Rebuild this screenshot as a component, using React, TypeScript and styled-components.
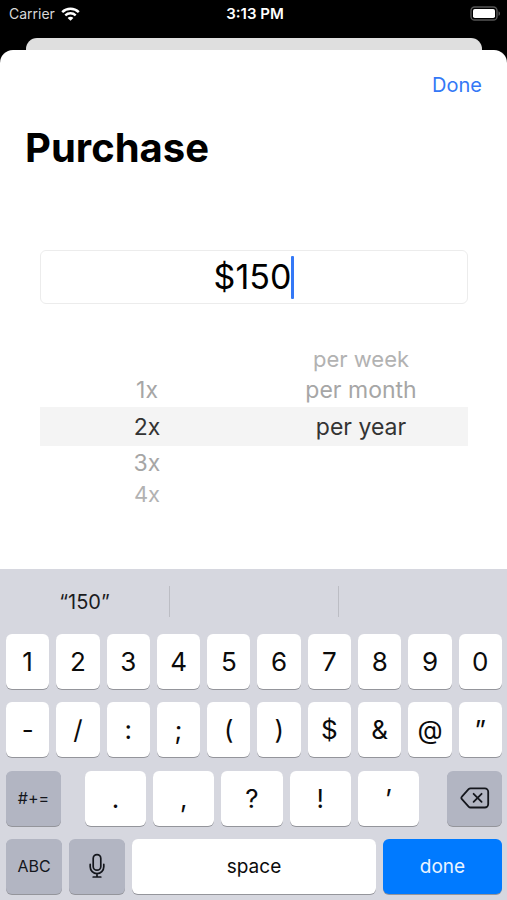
import React, { useState } from "react";
import styled, { createGlobalStyle, css } from "styled-components";

const GlobalStyle = createGlobalStyle`
  *, *::before, *::after { box-sizing: border-box; }
  html, body { margin: 0; background: #000; }
  body, button, input {
    font-family: Inter, "Liberation Sans", sans-serif;
  }
  button { margin: 0; padding: 0; border: 0; background: none; cursor: pointer; }
`;

const Screen = styled.div`
  display: flex;
  flex-direction: column;
  min-height: 100vh;
  background: #000;
`;

const StatusBar = styled.header`
  display: grid;
  grid-template-columns: 1fr auto 1fr;
  align-items: center;
  height: 27px;
  margin-bottom: 11px;
  padding: 0 6px 0 9px;
  color: #fff;
  font-size: 14px;
`;

const Carrier = styled.span`
  display: flex;
  align-items: center;
  gap: 6px;
  color: #d8d8d8;
`;

const Clock = styled.time`
  font-size: 15px;
  font-weight: 600;
`;

const BatterySlot = styled.span`
  display: flex;
  justify-content: flex-end;
`;

const BackCard = styled.div`
  height: 12px;
  margin: 0 25px 0 26px;
  border-radius: 11px 11px 0 0;
  background: #dfdfdf;
`;

const Sheet = styled.main`
  flex: 1;
  display: flex;
  flex-direction: column;
  border-radius: 13px 13px 0 0;
  background: #fff;
  overflow: hidden;
`;

const SheetNav = styled.nav`
  display: flex;
  justify-content: flex-end;
  padding: 20px 25px 0;
`;

const DoneLink = styled.button`
  color: #3478f6;
  font-size: 20px;
  line-height: 30px;
`;

const Title = styled.h1`
  margin: 24px 25px 0;
  color: #000;
  font-size: 40px;
  font-weight: 700;
  line-height: 48px;
`;

const Form = styled.form`
  flex: 1;
  margin: 78px 39px 0 40px;
`;

const AmountField = styled.label`
  display: flex;
  align-items: center;
  justify-content: center;
  height: 54px;
  border: 1px solid #ececec;
  border-radius: 6px;
`;

const AmountInput = styled.input`
  field-sizing: content;
  padding: 0;
  border: 0;
  outline: 0;
  background: transparent;
  color: #000;
  caret-color: transparent;
  font-size: 34px;
  line-height: 44px;
`;

const Caret = styled.span`
  width: 3px;
  height: 43px;
  border-radius: 1px;
  background: #3478f6;
`;

const Wheels = styled.div`
  display: grid;
  grid-template-columns: 1fr 1fr;
  margin-top: 47px;
`;

const Wheel = styled.fieldset`
  display: grid;
  grid-template-rows: 22px 34px 39px 34px 28px;
  min-width: 0;
  margin: 0;
  padding: 0;
  border: 0;
`;

type Depth = "far" | "near" | "selected";

const WheelItem = styled.label<{ $depth: Depth; $row: number }>`
  grid-row: ${(p) => p.$row};
  display: flex;
  align-items: ${(p) => (p.$depth === "far" && p.$row === 1 ? "flex-end" : "center")};
  justify-content: center;
  white-space: nowrap;
  font-size: 23px;
  line-height: 32px;
  color: #a6a6a6;
  ${(p) =>
    p.$depth === "selected" &&
    css`
      background: #f4f4f4;
      color: #333;
    `}
  ${(p) =>
    p.$depth === "far" &&
    css`
      color: #b2b2b2;
      font-size: 22px;
      line-height: 28px;
    `}
`;

const HiddenRadio = styled.input`
  appearance: none;
  width: 0;
  height: 0;
  margin: 0;
`;

const Keyboard = styled.section`
  background: #d6d7df;
  padding-bottom: 6px;
`;

const Suggestions = styled.div`
  display: grid;
  grid-template-columns: repeat(3, 1fr);
  align-items: center;
  height: 65px;
`;

const Suggestion = styled.button`
  height: 31px;
  color: #1c1c1e;
  font-size: 20px;
  line-height: 30px;
  & + & {
    border-left: 1px solid #bcbdc4;
  }
`;

const Keys = styled.div`
  display: flex;
  flex-direction: column;
  justify-content: space-between;
  min-height: 260px;
  padding: 0 5px 0 6px;
`;

const KeyRow = styled.div`
  display: flex;
  gap: 7px;
`;

const PunctuationGroup = styled.div`
  flex: 1;
  display: flex;
  gap: 7px;
  margin: 0 21px 0 17px;
`;

type KeyTone = "light" | "dark" | "blue";

const tones: Record<KeyTone, { back: string; text: string }> = {
  light: { back: "#fff", text: "#0b0b0b" },
  dark: { back: "#b2b5c2", text: "#14161c" },
  blue: { back: "#007aff", text: "#eaf4ff" },
};

const Key = styled.button<{ $tone?: KeyTone; $width?: number; $size?: number }>`
  flex: ${(p) => (p.$width ? `0 0 ${p.$width}px` : "1 1 0")};
  display: flex;
  align-items: center;
  justify-content: center;
  height: 55px;
  min-width: 0;
  border-radius: 6px;
  box-shadow: 0 1px 0 #94959b;
  background: ${(p) => tones[p.$tone ?? "light"].back};
  color: ${(p) => tones[p.$tone ?? "light"].text};
  font-size: ${(p) => p.$size ?? 26}px;
`;

const WifiIcon = () => (
  <svg width="19" height="14" viewBox="0 0 19 14" fill="none" aria-hidden="true">
    <path d="M1.2 5.1C5.8.7 13.2.7 17.8 5.1" stroke="#fff" strokeWidth="2.5" />
    <path d="M4.3 8.3c2.9-2.7 7.5-2.7 10.4 0" stroke="#fff" strokeWidth="2.4" />
    <path d="M6.6 10.9c1.6-1.5 4.2-1.5 5.8 0L9.5 13.8z" fill="#fff" />
  </svg>
);

const BatteryIcon = () => (
  <svg width="31" height="15" viewBox="0 0 31 15" aria-hidden="true">
    <rect x="1" y="1" width="26" height="13" rx="3.6" fill="none" stroke="#555" strokeWidth="1.4" />
    <rect x="3" y="3" width="22" height="9" rx="1.8" fill="#fff" />
    <path d="M28.5 5.2c2 .8 2 3.8 0 4.6z" fill="#555" />
  </svg>
);

const MicIcon = () => (
  <svg width="18" height="26" viewBox="0 0 18 26" fill="none" stroke="#14161c" strokeWidth="1.7" strokeLinecap="round" aria-hidden="true">
    <rect x="5.2" y="1.6" width="7.6" height="15.6" rx="3.8" />
    <path d="M2.2 11.4v2.4a6.8 6.8 0 0 0 13.6 0v-2.4M9 20.6v3.2M5.2 24h7.6" />
  </svg>
);

const DeleteIcon = () => (
  <svg width="30" height="22" viewBox="0 0 30 22" fill="none" stroke="#14161c" strokeWidth="1.8" strokeLinecap="round" strokeLinejoin="round" aria-hidden="true">
    <path d="M10.6 1.3h14.2a3.4 3.4 0 0 1 3.4 3.4v12.4a3.4 3.4 0 0 1-3.4 3.4H10.6a2.8 2.8 0 0 1-2-.9L1.9 12.2a1.8 1.8 0 0 1 0-2.6L8.6 2.2a2.8 2.8 0 0 1 2-.9z" />
    <path d="M13.6 6.8l8 8M21.6 6.8l-8 8" />
  </svg>
);

interface WheelEntry {
  text: string;
  row: number;
  depth: Depth;
}

const counts: WheelEntry[] = [
  { text: "1x", row: 2, depth: "near" },
  { text: "2x", row: 3, depth: "selected" },
  { text: "3x", row: 4, depth: "near" },
  { text: "4x", row: 5, depth: "far" },
];

const periods: WheelEntry[] = [
  { text: "per week", row: 1, depth: "far" },
  { text: "per month", row: 2, depth: "near" },
  { text: "per year", row: 3, depth: "selected" },
];

function WheelPicker({ name, label, entries }: { name: string; label: string; entries: WheelEntry[] }) {
  return (
    <Wheel aria-label={label}>
      {entries.map((e) => (
        <WheelItem key={e.text} $row={e.row} $depth={e.depth}>
          <HiddenRadio type="radio" name={name} value={e.text} defaultChecked={e.depth === "selected"} />
          {e.text}
        </WheelItem>
      ))}
    </Wheel>
  );
}

const digits = ["1", "2", "3", "4", "5", "6", "7", "8", "9", "0"];
const symbols = ["-", "/", ":", ";", "(", ")", "$", "&", "@", "”"];
const punctuation = [".", ",", "?", "!", "’"];

export default function App() {
  const [amount, setAmount] = useState("$150");
  const type = (char: string) => setAmount((a) => a + char);

  return (
    <Screen>
      <GlobalStyle />
      <StatusBar>
        <Carrier>
          Carrier
          <WifiIcon />
        </Carrier>
        <Clock>3:13 PM</Clock>
        <BatterySlot>
          <BatteryIcon />
        </BatterySlot>
      </StatusBar>
      <BackCard />
      <Sheet>
        <SheetNav>
          <DoneLink type="button">Done</DoneLink>
        </SheetNav>
        <Title>Purchase</Title>
        <Form>
          <AmountField>
            <AmountInput aria-label="Amount" value={amount} onChange={(e) => setAmount(e.target.value)} />
            <Caret />
          </AmountField>
          <Wheels>
            <WheelPicker name="count" label="Times" entries={counts} />
            <WheelPicker name="period" label="Period" entries={periods} />
          </Wheels>
        </Form>
        <Keyboard aria-label="Keyboard">
          <Suggestions>
            <Suggestion type="button">“150”</Suggestion>
            <Suggestion type="button" aria-label="Empty suggestion" />
            <Suggestion type="button" aria-label="Empty suggestion" />
          </Suggestions>
          <Keys>
            <KeyRow>
              {digits.map((c) => (
                <Key key={c} type="button" onClick={() => type(c)}>{c}</Key>
              ))}
            </KeyRow>
            <KeyRow>
              {symbols.map((c) => (
                <Key key={c} type="button" onClick={() => type(c)}>{c}</Key>
              ))}
            </KeyRow>
            <KeyRow>
              <Key type="button" $tone="dark" $width={55} $size={16}>#+=</Key>
              <PunctuationGroup>
                {punctuation.map((c) => (
                  <Key key={c} type="button" onClick={() => type(c)}>{c}</Key>
                ))}
              </PunctuationGroup>
              <Key type="button" $tone="dark" $width={55} aria-label="Delete" onClick={() => setAmount((a) => a.slice(0, -1))}>
                <DeleteIcon />
              </Key>
            </KeyRow>
            <KeyRow>
              <Key type="button" $tone="dark" $width={56} $size={16}>ABC</Key>
              <Key type="button" $tone="dark" $width={56} aria-label="Dictate">
                <MicIcon />
              </Key>
              <Key type="button" $size={19} onClick={() => type(" ")}>space</Key>
              <Key type="button" $tone="blue" $width={119} $size={19}>done</Key>
            </KeyRow>
          </Keys>
        </Keyboard>
      </Sheet>
    </Screen>
  );
}
